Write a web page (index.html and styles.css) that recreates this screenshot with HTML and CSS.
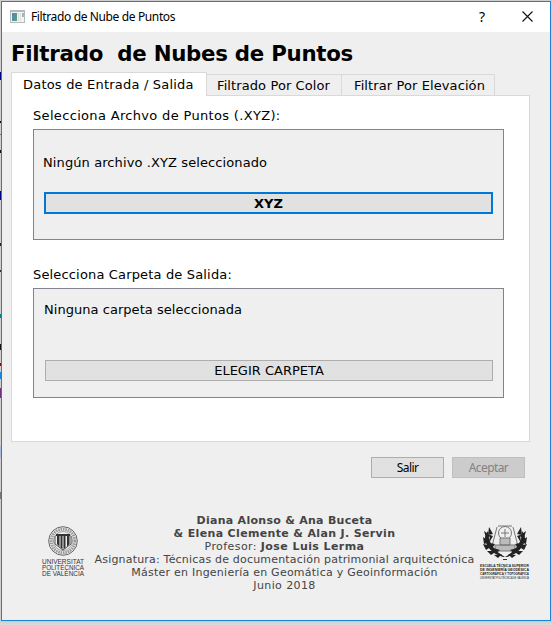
FILE: index.html
```html
<!DOCTYPE html>
<html lang="es">
<head>
<meta charset="utf-8">
<title>Filtrado de Nube de Puntos</title>
<link rel="stylesheet" href="styles.css">
</head>
<body>
<main class="window">
  <header class="titlebar">
    <svg class="app-icon" width="15" height="13" viewBox="0 0 15 13">
      <defs><linearGradient id="pane" x1="0" y1="0" x2="1" y2="1"><stop offset="0" stop-color="#4f83b4"/><stop offset="1" stop-color="#54a576"/></linearGradient></defs>
      <path fill="#b5b8bd" d="M0 0h15v13H0z"/><path fill="#f3f3f3" d="M1 2h13v10H1z"/>
      <path fill="url(#pane)" d="M2 3h5v8H2z"/><path fill="#dedede" d="M8 3h1v8H8zM10 3h1v8h-1z"/><path fill="#8fc0ad" d="M12 3h2v4h-2z"/>
    </svg>
    <span class="caption">Filtrado de Nube de Puntos</span>
    <span class="help">?</span>
    <svg class="close" width="11" height="11" viewBox="0 0 11 11"><path d="M.5.5l10 10M10.5.5l-10 10" stroke="#111" stroke-width="1.1"/></svg>
  </header>
  <h1>Filtrado&nbsp; de Nubes de Puntos</h1>
  <nav class="tabs">
    <div class="tab active">Datos de Entrada / Salida</div>
    <div class="tab color">Filtrado Por Color</div>
    <div class="tab elevation">Filtrar Por Elevación</div>
  </nav>
  <section class="panel">
    <div class="label first">Selecciona Archvo de Puntos (.XYZ):</div>
    <div class="group file">
      <p>Ningún archivo .XYZ seleccionado</p>
      <button class="wide focused">XYZ</button>
    </div>
    <div class="label second">Selecciona Carpeta de Salida:</div>
    <div class="group folder">
      <p>Ninguna carpeta seleccionada</p>
      <button class="wide">ELEGIR CARPETA</button>
    </div>
  </section>
  <div class="actions"><button>Salir</button><button disabled>Aceptar</button></div>
  <footer>
    <svg class="upv" width="44" height="54" viewBox="0 0 44 54">
      <g fill="none" stroke="#666"><circle cx="22" cy="15" r="14.3" stroke-width="1"/><circle cx="22" cy="15" r="11.8" stroke="#999" stroke-width="3" stroke-dasharray="1.6 .8"/><circle cx="22" cy="15" r="9.5" stroke-width=".6"/></g>
      <path fill="#333" d="M15 8h14v2H15zM16 10h2.5v11L16 18zM19.5 10h2v13l-2-1zM22.5 10h2v12l-2 1zM26 10h2.5v8L26 21z"/>
      <path stroke="#555" fill="none" d="M14 10v8l8 6 8-6v-8"/>
      <g class="upv-name"><text x="1" y="38" textLength="42" lengthAdjust="spacingAndGlyphs">UNIVERSITAT</text><text x="1" y="44" textLength="42" lengthAdjust="spacingAndGlyphs">POLITÈCNICA</text><text x="1" y="50" textLength="42" lengthAdjust="spacingAndGlyphs">DE VALÈNCIA</text></g>
    </svg>
    <div class="credits">
      <div class="c1"><b>Diana Alonso &amp; Ana Buceta</b></div>
      <div class="c2"><b>&amp; Elena Clemente &amp; Alan J. Servin</b></div>
      <div class="c3">Profesor: <b>Jose Luis Lerma</b></div>
      <div class="c4">Asignatura: Técnicas de documentación patrimonial arquitectónica</div>
      <div class="c5">Máster en Ingeniería en Geomática y Geoinformación</div>
      <div class="c6">Junio 2018</div>
    </div>
    <svg class="school" width="52" height="58" viewBox="0 0 52 58">
      <g fill="none" stroke="#777"><circle cx="26" cy="9" r="6.5"/><path d="M26 5v8M22 9h8M18 3L12 26M34 3l6 23M19 2h14"/><path d="M16 21h20v6H16zM21 14h10v7H21z" fill="#bbb"/></g>
      <g id="branch" fill="#222"><path d="M9 7c-3 4-4 8-2 12 3 7 8 11 17 14l2 0C15 27 9 18 9 7z"/>
      <path d="M10 3l4 7-5 1zM5 7l7 5-5 2zM4 13l7 5-6 2zM4 20l9 2-6 4zM8 27l10 0-6 4zM15 31l8-1-4 4zM14 12l-4 7 1-8zM16 20l-4 6-1-7zM21 26l-5 4-2-6z"/></g>
      <use href="#branch" transform="translate(52 0) scale(-1 1)"/>
      <path stroke="#333" d="M24 35.5h4"/>
      <g class="school-name"><text x="1" y="42.5" textLength="49" lengthAdjust="spacingAndGlyphs">ESCUELA TÉCNICA SUPERIOR</text><text x="1" y="47" textLength="49" lengthAdjust="spacingAndGlyphs">DE INGENIERÍA GEODÉSICA</text><text x="1" y="51.2" textLength="49" lengthAdjust="spacingAndGlyphs">CARTOGRÁFICA Y TOPOGRÁFICA</text><text class="tiny" x="1" y="54.8" textLength="49" lengthAdjust="spacingAndGlyphs">UNIVERSITAT POLITÈCNICA DE VALÈNCIA</text></g>
    </svg>
  </footer>
</main>
</body>
</html>
```
FILE: styles.css
```css
* { box-sizing: border-box; }
body {
  margin: 0;
  width: 552px;
  height: 625px;
  padding: 1px;
  overflow: hidden;
  background:
    linear-gradient(#111, #111) 0 121px / 1px 2px no-repeat,
    linear-gradient(#777, #777) 0 134px / 1px 1px no-repeat,
    linear-gradient(#111, #111) 0 150px / 1px 3px no-repeat,
    linear-gradient(#000080, #000080) 0 72px / 1px 8px no-repeat,
    linear-gradient(#000080, #000080) 0 191px / 1px 9px no-repeat,
    linear-gradient(#222, #222) 0 243px / 1px 3px no-repeat,
    linear-gradient(#333, #333) 0 270px / 1px 2px no-repeat,
    linear-gradient(#008080, #008080) 0 314px / 1px 4px no-repeat,
    linear-gradient(#111, #111) 0 344px / 1px 6px no-repeat,
    linear-gradient(#900, #900) 0 363px / 1px 3px no-repeat,
    linear-gradient(#2384d7, #2384d7) 0 372px / 1px 7px no-repeat,
    linear-gradient(#703080, #703080) 0 388px / 1px 10px no-repeat,
    linear-gradient(#a7bce0, #a7bce0) 0 446px / 1px 12px no-repeat,
    linear-gradient(#777, #777) 0 492px / 1px 7px no-repeat,
    linear-gradient(#ccc, #ddd) 0 621px / 552px 4px no-repeat,
    #cfcfcf;
  font-family: "DejaVu Sans", sans-serif;
  font-size: 13px;
  color: #000;
}
.window {
  width: 550px;
  height: 620px;
  border: 1px solid #1a82d2;
  background: #efefef;
  display: flex;
  flex-direction: column;
}
.titlebar {
  height: 30px;
  flex: none;
  background: #fff;
  display: flex;
  align-items: center;
  padding: 0 17px 0 8px;
}
.app-icon { margin-bottom: 2px; }
.caption { margin-left: 6px; font: 12px/30px "Noto Sans", sans-serif; letter-spacing: -0.37px; }
.help { margin-left: auto; font: 14px/28px "Noto Sans", sans-serif; }
.close { margin: 0 0 1px 37px; }
h1 {
  margin: 0 0 0 9px;
  height: 40px;
  font-size: 21.3px;
  line-height: 44px;
  letter-spacing: -0.26px;
  white-space: pre;
}
.tabs { display: flex; align-items: flex-end; height: 23px; margin-left: 9px; flex: none; }
.tab {
  height: 21px;
  border: 1px solid #d9d9d9;
  border-width: 1px 1px 0 0;
  line-height: 21px;
  letter-spacing: 0.1px;
  white-space: nowrap;
}
.tab.active {
  width: 196px;
  height: 24px;
  margin-bottom: -1px;
  position: relative;
  background: #fff;
  border-left-width: 1px;
  padding-left: 11px;
  line-height: 24px;
  letter-spacing: 0.2px;
}
.tab.color { width: 135px; padding-left: 10px; }
.tab.elevation { width: 153px; padding-left: 12px; }
.panel {
  width: 519px;
  height: 347px;
  flex: none;
  margin-left: 9px;
  border: 1px solid #d9d9d9;
  background: #fff;
  padding-left: 21px;
}
.label { height: 33px; line-height: 40px; white-space: nowrap; letter-spacing: 0.33px; }
.label.second { height: 48px; line-height: 69px; letter-spacing: 0.16px; }
.group { width: 471px; border: 1px solid #83838d; background: #efefef; padding: 0 10px; white-space: nowrap; }
.group p { margin: 0; }
.group.file { height: 111px; }
.group.file p { height: 62px; line-height: 66px; margin-left: -1px; letter-spacing: 0.1px; }
.group.folder { height: 110px; }
.group.folder p { height: 71px; line-height: 42px; letter-spacing: 0.04px; }
.group.folder .wide { margin-left: 1px; width: 448px; }
button {
  display: block;
  width: 73px;
  height: 21px;
  padding: 0;
  border: 1px solid #adadad;
  background: #e1e1e1;
  font: 12px/19px "Noto Sans", sans-serif;
  letter-spacing: -0.6px;
  color: #000;
}
button:disabled { background: #ccc; border-color: #bfbfbf; color: #838383; }
.wide { width: 449px; font: 13px/19px "DejaVu Sans", sans-serif; letter-spacing: 0; }
.wide.focused { height: 22px; border: 2px solid #0078d7; font-weight: bold; line-height: 18px; padding-top: 1px; }
.actions { display: flex; gap: 8px; margin: 15px 0 0 369px; flex: none; }
footer { display: flex; flex: none; margin-top: 36px; color: #444; }
.upv { margin: 12px 0 0 39px; overflow: visible; }
.credits { width: 385px; flex: none; margin-left: 7px; font-size: 11px; line-height: 13px; text-align: center; white-space: nowrap; }
.c1 { letter-spacing: 0.28px; }
.c2 { letter-spacing: 0.35px; }
.c3 { letter-spacing: 0.42px; }
.c4 { letter-spacing: 0.19px; }
.c5 { letter-spacing: 0.24px; }
.c6 { letter-spacing: 0.4px; }
.school { margin: 10px 0 0 2px; overflow: visible; }
.upv-name { font: 6.4px "Liberation Sans", sans-serif; fill: #333; }
.school-name { font: bold 4.2px "Liberation Sans", sans-serif; fill: #222; }
.school-name .tiny { font-size: 2.6px; font-weight: normal; }
```
